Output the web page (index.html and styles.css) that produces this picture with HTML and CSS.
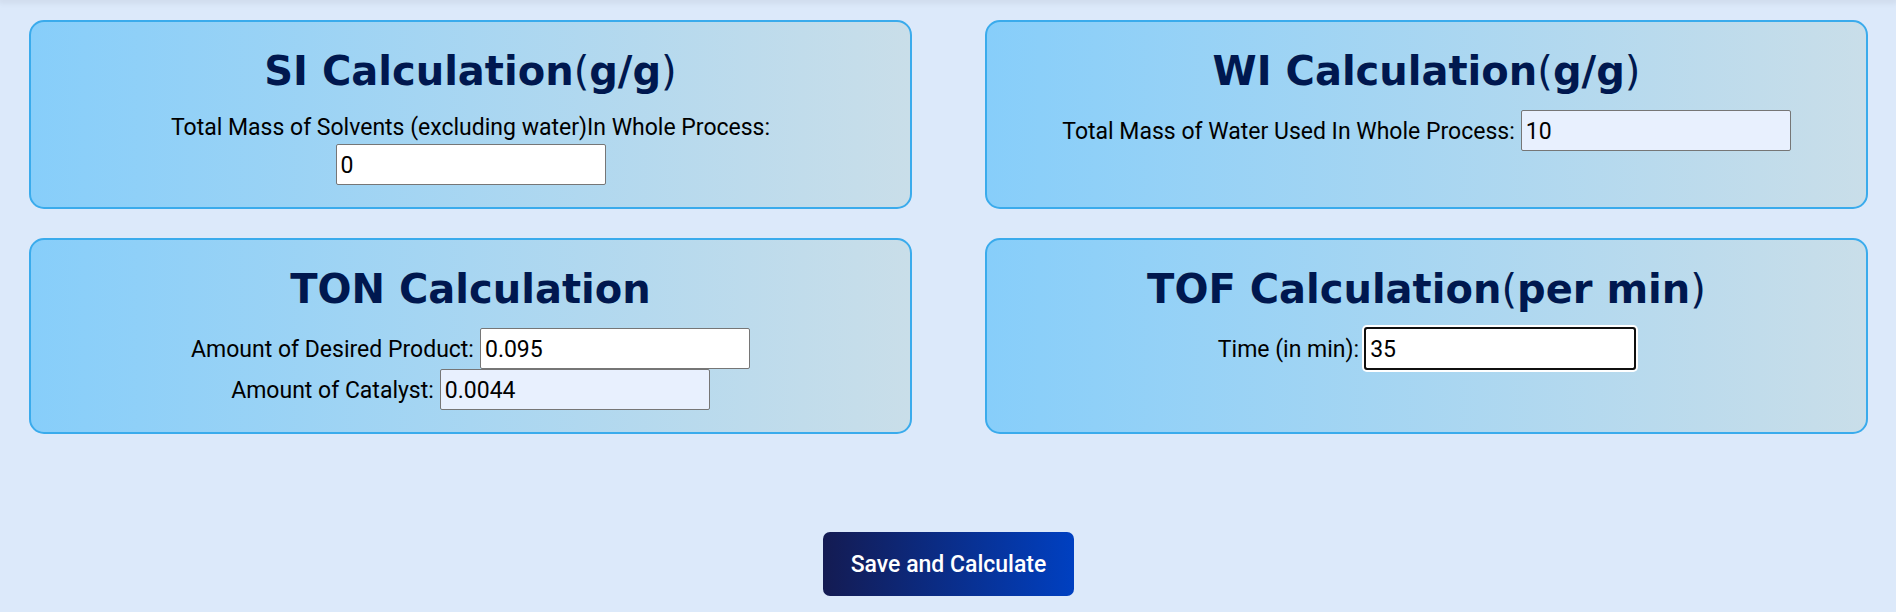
FILE: index.html
```html
<!DOCTYPE html>
<html lang="en">
<head>
<meta charset="utf-8">
<title>Calculation</title>
<link rel="stylesheet" href="styles.css">
</head>
<body>
<header class="topbar"></header>
<form class="calc">
  <div class="grid">
    <section class="card">
      <h2 class="title">SI Calculation<span class="paren">(</span>g/g<span class="paren">)</span></h2>
      <div class="row"><label class="caption" for="solvents">Total Mass of Solvents (excluding water)In Whole Process:</label> <input class="field" id="solvents" type="text" value="0"></div>
    </section>
    <section class="card">
      <h2 class="title">WI Calculation<span class="paren">(</span>g/g<span class="paren">)</span></h2>
      <div class="row"><label class="caption" for="water">Total Mass of Water Used In Whole Process:</label> <input class="field filled" id="water" type="text" value="10"></div>
    </section>
    <section class="card">
      <h2 class="title">TON Calculation</h2>
      <div class="row"><label class="caption" for="product">Amount of Desired Product:</label> <input class="field" id="product" type="text" value="0.095"></div>
      <div class="row"><label class="caption" for="catalyst">Amount of Catalyst:</label> <input class="field filled" id="catalyst" type="text" value="0.0044"></div>
    </section>
    <section class="card">
      <h2 class="title">TOF Calculation<span class="paren">(</span>per min<span class="paren">)</span></h2>
      <div class="row"><label class="caption" for="time">Time (in min):</label> <input class="field active" id="time" type="text" value="35"></div>
    </section>
  </div>
  <button class="save" type="button">Save and Calculate</button>
</form>
</body>
</html>
```
FILE: styles.css
```css
* {
  box-sizing: border-box;
}

body {
  margin: 0;
  background: #dce9fa;
  color: #000;
  font-family: Roboto, sans-serif;
  font-size: 23px;
  line-height: 32px;
}

.topbar {
  height: 0;
  box-shadow: 0 0 6px 2px rgba(0, 0, 0, 0.1);
}

.calc {
  display: flex;
  flex-direction: column;
  align-items: center;
  padding: 20px 28px 16px 29px;
}

.grid {
  display: grid;
  grid-template-columns: 1fr 1fr;
  gap: 29px 73px;
  width: 100%;
}

.card {
  padding: 24px 24px 22px;
  border: 2px solid #3aabec;
  border-radius: 15px;
  background: linear-gradient(to right, #87cefa, #c9dee9);
  text-align: center;
}

.title {
  margin: 0 0 14px;
  color: #00184f;
  font-family: "DejaVu Sans", sans-serif;
  font-size: 40px;
  font-weight: 700;
  line-height: 50px;
}

.paren {
  font-weight: 400;
}

.row {
  display: flex;
  flex-wrap: wrap;
  align-items: center;
  justify-content: center;
  column-gap: 6px;
}

.caption {
  padding-top: 2px;
}

.field {
  width: 270px;
  height: 41px;
  padding: 2px 4px 0;
  border: 1px solid #767676;
  border-radius: 2px;
  background: #fff;
  color: #000;
  font-family: inherit;
  font-size: 23px;
}

.filled {
  background: #e8f0fe;
}

.active {
  border-color: #101010;
  outline: 2px solid #101010;
  outline-offset: -1px;
  box-shadow: 0 0 0 3px #fff;
}

.save {
  margin-top: 98px;
  padding: 16px 28px 14px;
  border: 0;
  border-radius: 7px;
  background: linear-gradient(to right, #141b52, #0040c1);
  color: #fff;
  font-family: inherit;
  font-size: 23px;
  font-weight: 500;
  line-height: 34px;
}
```
